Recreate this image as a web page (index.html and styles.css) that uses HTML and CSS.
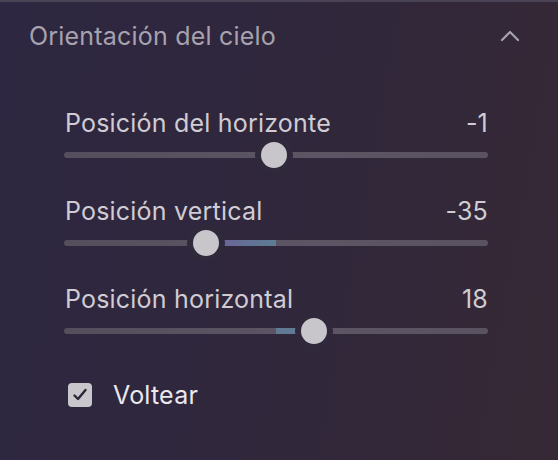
FILE: index.html
```html
<!DOCTYPE html>
<html lang="es">
  <head>
    <meta charset="UTF-8" />
    <meta name="viewport" content="width=device-width, initial-scale=1.0" />
    <title>Orientación del cielo</title>
    <link rel="stylesheet" href="styles.css">
  </head>
  <body>
    <div class="panel">
      <div class="panel-header">
        <h2>Orientación del cielo</h2>
        <svg class="chevron" width="20" height="12" viewBox="0 0 20 12">
          <path d="M2 10 L10 2 L18 10" fill="none" stroke="#a9a3b0" stroke-width="2.2" stroke-linecap="round" stroke-linejoin="round" />
        </svg>
      </div>

      <div class="sliders">
        <div class="slider-row">
          <div class="slider-label">
            <span>Posición del horizonte</span>
            <span class="value">-1</span>
          </div>
          <div class="track">
            <div class="fill" style="left: 49.5%; width: 0.5%"></div>
            <div class="thumb" style="left: calc(13px + 0.495 * (100% - 26px))"></div>
          </div>
        </div>

        <div class="slider-row">
          <div class="slider-label">
            <span>Posición vertical</span>
            <span class="value">-35</span>
          </div>
          <div class="track">
            <div class="fill fill-purple" style="left: 33%; width: 17%"></div>
            <div class="thumb" style="left: calc(13px + 0.325 * (100% - 26px))"></div>
          </div>
        </div>

        <div class="slider-row">
          <div class="slider-label">
            <span>Posición horizontal</span>
            <span class="value">18</span>
          </div>
          <div class="track">
            <div class="fill fill-blue" style="left: 50%; width: 9%"></div>
            <div class="thumb" style="left: calc(13px + 0.595 * (100% - 26px))"></div>
          </div>
        </div>

        <label class="check-row">
          <span class="checkbox">
            <svg width="16" height="14" viewBox="0 0 16 14">
              <path d="M2.5 7.5 L6 11 L13.5 2" fill="none" stroke="#2c2535" stroke-width="2.4" stroke-linecap="round" stroke-linejoin="round" />
            </svg>
          </span>
          <span>Voltear</span>
        </label>
      </div>
    </div>
  </body>
</html>
```

FILE: styles.css
```css
/* Page */
body {
  margin: 0;
  width: 558px;
  height: 460px;
  overflow: hidden;
  font-family: Inter, "Noto Sans", sans-serif;
  letter-spacing: 0.2px;
  background: linear-gradient(100deg, #2d2741 0%, #30273c 50%, #362935 100%);
}

.panel {
  border-top: 2px solid #4a4356;
  height: 458px;
  box-sizing: border-box;
}

/* Header */
.panel-header {
  display: flex;
  justify-content: space-between;
  align-items: center;
  padding: 19px 38px 0 29px;
  height: 30px;
}

.panel-header h2 {
  margin: 0;
  font-size: 25px;
  line-height: 30px;
  font-weight: 400;
  color: #a8a2af;
}

/* Sliders */
.sliders {
  padding: 57px 70px 0 64px;
  display: flex;
  flex-direction: column;
  gap: 38px;
}

.slider-label {
  display: flex;
  justify-content: space-between;
  font-size: 25px;
  line-height: 30px;
  color: #d0ccd3;
  padding-left: 1px;
}

.track {
  position: relative;
  height: 6px;
  margin-top: 14px;
  border-radius: 3px;
  background: linear-gradient(90deg, #544e5d, #5d5563 60%, #5a5260);
}

.fill {
  position: absolute;
  top: 0;
  height: 100%;
}

.fill-purple {
  background: linear-gradient(90deg, #6f5c99, #5b7d93);
}

.fill-blue {
  background: #607a93;
}

.thumb {
  position: absolute;
  top: 50%;
  width: 26px;
  height: 26px;
  margin: -13px 0 0 -13px;
  border-radius: 50%;
  background: #c8c6ca;
  box-shadow: 0 0 0 6px #30283b;
}

/* Checkbox */
.check-row {
  display: flex;
  align-items: center;
  gap: 21px;
  margin-top: 8px;
  padding-left: 4px;
  font-size: 25px;
  line-height: 30px;
  color: #ebe8ee;
}

.checkbox {
  width: 24px;
  height: 24px;
  border-radius: 4px;
  background: #c9c6cc;
  display: flex;
  align-items: center;
  justify-content: center;
}
```
